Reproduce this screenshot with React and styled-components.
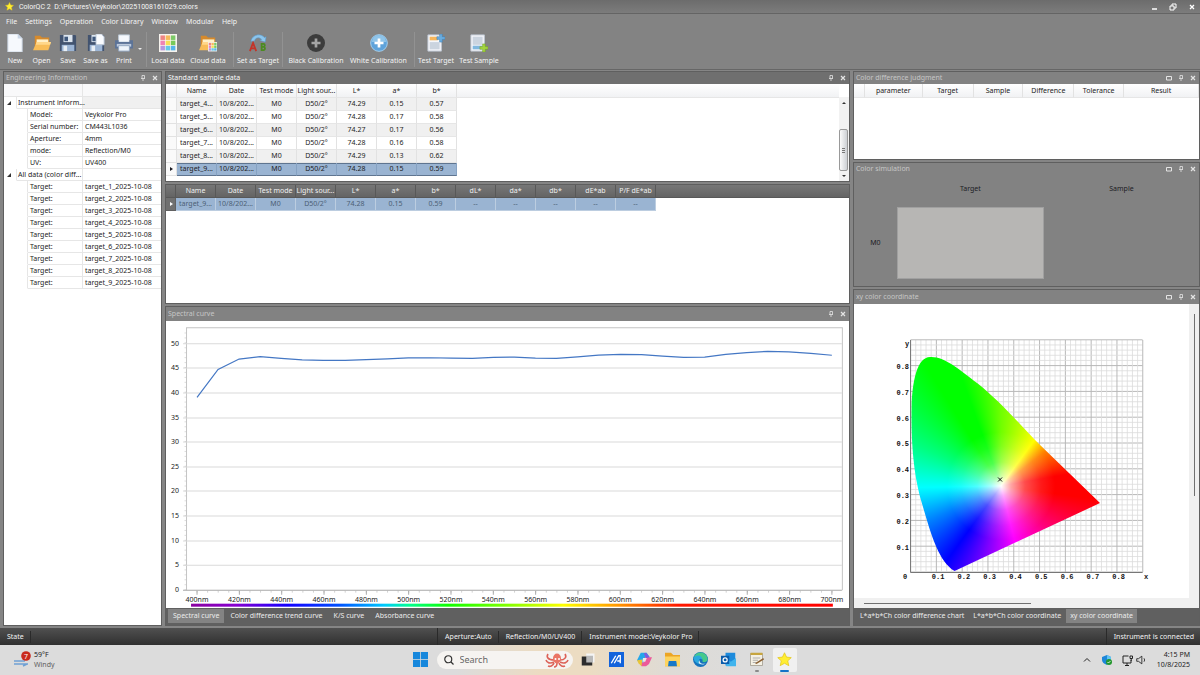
/* eslint-disable react/prop-types */
import React from "react";
import styled, { createGlobalStyle, css } from "styled-components";

const GlobalStyle = createGlobalStyle`
    * {
        box-sizing: border-box;
    }

    body {
        margin: 0;
        background: #7f7f7f;
        font-family: "Noto Sans", "Open Sans", sans-serif;
        font-size: 7px;
        line-height: 12px;
        color: #1c1c24;
    }

    button, input {
        font: inherit;
        color: inherit;
        border: 0;
        padding: 0;
        margin: 0;
        background: none;
    }

    svg {
        display: block;
    }
`;

const Page = styled.div`
    display: grid;
    grid-template-rows: 14px 16px 40px 1fr 17px 30px;
    min-height: 100vh;
`;

const TitleBar = styled.header`
    display: flex;
    align-items: center;
    gap: 5px;
    padding: 0 4px 0 5px;
    color: #f4f4f4;
    background: linear-gradient(#6c6c6c, #7c7c7c);
    border-bottom: 1px solid #646464;

    h1 {
        flex: 1;
        margin: 0;
        font-family: Roboto, sans-serif;
        font-size: 7px;
        font-weight: 400;
        white-space: pre;
    }
`;

const WindowButtons = styled.div`
    display: flex;
    gap: 11px;
`;

const MenuBar = styled.nav`
    display: flex;
    align-items: center;
    gap: 8px;
    padding: 0 6px;
    color: #f4f4f4;
    background: #838383;
`;

const ToolBar = styled.div`
    display: flex;
    align-items: stretch;
    padding: 2px;
    color: #f4f4f4;
    background: #838383;
    border-bottom: 1px solid #666;
`;

const Tool = styled.button`
    display: flex;
    flex-direction: column;
    align-items: center;
    justify-content: space-between;
    flex: none;
    width: ${(props) => props.$width}px;
    padding-top: 2px;
    white-space: nowrap;
    line-height: 12px;
`;

const DropArrow = styled.span`
    display: flex;
    align-items: center;
`;

const Separator = styled.span`
    width: 1px;
    margin: 0 3px;
    background: #929292;
`;

const Main = styled.main`
    display: grid;
    grid-template-columns: 159px minmax(0, 1fr) 29%;
    gap: 3px;
    padding: 1px 0 2px 3px;
    background: #858585;
`;

const Column = styled.div`
    display: flex;
    flex-direction: column;
    gap: 2px;
    min-width: 0;
`;

const PanelBox = styled.section`
    display: flex;
    flex-direction: column;
    flex: ${(props) => (props.$grow ? "1 1 0" : "none")};
    min-height: 0;
    border: 1px solid #5f5f5f;
    background: #828282;
`;

const PanelTitle = styled.div`
    display: flex;
    align-items: center;
    gap: 6px;
    height: ${(props) => (props.$tall ? 14 : 12)}px;
    padding: 0 3px 0 2px;
    color: ${(props) => (props.$active ? "#fafafa" : "#c6c6c6")};
    background: ${(props) => (props.$active ? "#6f6f6f" : "#828282")};

    h2 {
        flex: 1;
        margin: 0;
        font-size: 7px;
        font-weight: 400;
    }

    button {
        color: #e4e4e4;
    }
`;

const PanelBody = styled.div`
    display: flex;
    flex: 1;
    min-height: ${(props) => props.$minHeight || 0}px;
    background: #fff;
`;

const DataTable = styled.table`
    flex: none;
    align-self: flex-start;
    border-collapse: separate;
    border-spacing: 0;
    table-layout: fixed;
    width: ${(props) => props.$width};

    th, td {
        height: 13px;
        padding: 0;
        overflow: hidden;
        font-weight: 400;
        line-height: 12px;
        text-align: center;
        white-space: nowrap;
        border-right: 1px solid #e2e2e2;
        border-bottom: 1px solid #e6e6e6;
    }

    th {
        height: 14px;
        background: linear-gradient(#fff, #f1f2f4);
    }

    tbody tr:nth-child(odd) td {
        background: #f0f0f0;
    }

    tbody tr.selected td {
        background: #9ab4d2;
        border-color: #86a2c2;
        border-bottom-color: #5f7590;
        box-shadow: inset 0 1px #5f7590;
    }

    tbody tr td:first-child, tbody tr.selected td:first-child {
        background: #fafafa;
        border-color: #e2e2e2;
        box-shadow: none;
    }

    ${(props) => props.$dark && css`
        color: #4c5f75;

        th {
            height: 13px;
            color: #f0f0f0;
            background: linear-gradient(#777, #646464);
            border-color: #585858;
        }

        tbody tr.selected td {
            background: #9ab4d2;
            border-color: #bccde0;
            box-shadow: none;
        }

        tbody tr.selected td:first-child {
            color: #fff;
            background: #707070;
            border-color: #606060;
        }
    `}
`;

const HeaderFill = styled.div`
    flex: 1;
    height: ${(props) => (props.$dark ? 13 : 14)}px;
    background: ${(props) => (props.$dark ? "linear-gradient(#777, #646464)" : "linear-gradient(#fff, #f1f2f4)")};
    border-bottom: 1px solid ${(props) => (props.$dark ? "#585858" : "#e6e6e6")};
`;

const InfoTable = styled.table`
    width: 100%;
    align-self: flex-start;
    border-collapse: separate;
    border-spacing: 0;
    table-layout: fixed;

    th, td {
        height: 12px;
        padding: 0 0 0 2px;
        font-weight: 400;
        line-height: 11px;
        text-align: left;
        white-space: nowrap;
        border-right: 1px solid #e6e6e6;
        border-bottom: 1px solid #e6e6e6;
    }

    td:last-child {
        border-right: 0;
    }

    thead td {
        height: 13px;
        background: #f9f9fa;
    }

    .group {
        padding-left: 1px;
    }

    .blank {
        border-bottom-color: #fff;
    }

    .shade {
        background: #f0f0f0;
    }
`;

const ScrollTrack = styled.div`
    display: flex;
    flex-direction: column;
    align-items: center;
    width: 10px;
    margin-top: 13px;
    padding: 4px 0 2px;
    background: #f2f2f2;
`;

const ScrollThumb = styled.div`
    width: 9px;
    height: 42px;
    margin: 24px 0 3px;
    padding: 18px 2px 0;
    border: 1px solid #999;
    border-radius: 2px;
    background: linear-gradient(90deg, #fafafa, #cdd0d4);

    i {
        display: block;
        height: 2px;
        border-top: 1px solid #777;
    }
`;

const Simulation = styled.div`
    display: grid;
    grid-template-columns: 43px 147fr 155fr;
    grid-template-rows: 12px 72px;
    row-gap: 12px;
    align-items: center;
    justify-items: center;
    padding: 8px 0 7px;

    .swatch {
        width: 100%;
        height: 100%;
        background: #b7b6b4;
        border: 1px solid #a0a0a0;
    }
`;

const Chart = styled.svg`
    width: 100%;
    height: 100%;
    min-height: 0;
    flex: 1;
    background: #fff;
`;

const ChartFrame = styled.div`
    display: grid;
    grid-template-columns: minmax(0, 1fr) 10px;
    grid-template-rows: minmax(0, 1fr) 10px;
    flex: 1 1 0;
    min-height: 0;
    background: #f0f0f0;
`;

const ThinBarVertical = styled.div`
    width: 1px;
    height: 62%;
    margin: 10px 0 0 5px;
    background: #707070;
`;

const ThinBarHorizontal = styled.div`
    width: 50%;
    height: 1px;
    margin: 5px 0 0 10px;
    background: #707070;
`;

const Gamut = styled.div`
    width: 200px;
    height: 220px;
    background:
        radial-gradient(circle at 91px 131px, #fff 0, rgba(255, 255, 255, 0.65) 10px, rgba(255, 255, 255, 0.3) 24px, rgba(255, 255, 255, 0.1) 40px, rgba(255, 255, 255, 0) 54px),
        conic-gradient(from 0deg at 91px 131px, #70ff00 0deg, #ffff00 36deg, #ff8000 52deg, #ff0000 80deg, #ff0000 98deg, #ff0080 134deg, #ff00ff 166deg, #8000ff 192deg, #0000ff 216deg, #0080ff 244deg, #00ffff 269deg, #00ff80 296deg, #00ff00 328deg, #00ff00 340deg, #70ff00 360deg);
`;

const TabStrip = styled.div`
    display: flex;
    gap: 1px;
    height: 17px;
    padding: 1px 2px 2px;
    color: #ececec;
    background: #606060;
`;

const Tab = styled.button`
    padding: 0 ${(props) => (props.$tight ? 4 : 5)}px;
    white-space: nowrap;
    background: ${(props) => (props.$active ? "#838383" : "transparent")};
`;

const StatusBar = styled.footer`
    display: flex;
    align-items: center;
    color: #f2f2f2;
    background: linear-gradient(#505050, #303030);

    span {
        padding: 0 6px 0 7px;
        border-right: 1px solid #2a2a2a;
    }

    .space {
        flex: 1;
        align-self: stretch;
        border-right: 1px solid #2a2a2a;
    }

    span:last-child {
        border-right: 0;
    }
`;

const TaskBar = styled.div`
    display: grid;
    grid-template-columns: 1fr auto 1fr;
    align-items: center;
    background: linear-gradient(90deg, #dcdcdc 38%, #ecdcc2 45%, #ecdcc2 49%, #dedbd6 56%, #dcdcdc 62%);
`;

const Weather = styled.div`
    display: flex;
    align-items: center;
    gap: 3px;
    padding-left: 13px;
    line-height: 10px;

    small {
        display: block;
        font-size: 7px;
        color: #606060;
    }
`;

const Apps = styled.div`
    display: flex;
    align-items: center;
    gap: 4px;
    padding-left: 5px;
`;

const AppButton = styled.button`
    display: flex;
    flex-direction: column;
    align-items: center;
    justify-content: space-between;
    width: 24px;
    height: 24px;
    padding: 4px 0 0;
    border-radius: 2px;
    background: ${(props) => (props.$active ? "#f0f0f0" : "transparent")};

    i {
        width: ${(props) => (props.$active ? 9 : 4)}px;
        height: 2px;
        border-radius: 1px;
        background: ${(props) => (props.$active ? "#1374c8" : props.$running ? "#8a8a8a" : "transparent")};
    }
`;

const SearchBox = styled.label`
    display: flex;
    align-items: center;
    gap: 6px;
    width: 136px;
    height: 18px;
    padding: 0 4px 0 7px;
    border-radius: 9px;
    background: #f6f4f1;

    input {
        flex: 1;
        min-width: 0;
        font-size: 9px;
        outline: 0;
    }

    input::placeholder {
        color: #666;
        opacity: 1;
    }
`;

const Tray = styled.div`
    display: flex;
    align-items: center;
    justify-content: flex-end;
    padding-right: 10px;

    button {
        margin-right: 10px;
    }

    svg + svg {
        margin-left: 2px;
    }

    time {
        margin-left: 10px;
        line-height: 10px;
        text-align: right;
    }
`;

const Icon = ({ size = 20, box = 20, children }) => (
    <svg width={size} height={size} viewBox={`0 0 ${box} ${box}`} aria-hidden="true">{children}</svg>
);

const Star = ({ size }) => (
    <Icon size={size}>
        <path d="M10 1l2.7 5.8 6.3.7-4.7 4.3 1.4 6.4L10 15l-5.700 3.200 1.400-6.400L1 7.500l6.300-.7z" fill="#ffee32" stroke="#e3c51b" />
    </Icon>
);

const Floppy = () => (
    <g>
        <path d="M1 1h17l1 1v17H1z" fill="#42536f" />
        <path d="M5 1h10v8H5z" fill="#dce5ef" />
        <path d="M6 3h4v5H6z" fill="#3f587c" />
        <path d="M3 12h14v7H3z" fill="#9cb5d5" />
        <path d="M5 13h4v6H5z" fill="#e8eef5" />
    </g>
);

const Folder = () => (
    <g>
        <path d="M2 2h6l2 2h8v12H2z" fill="#d68a2c" />
        <path d="M4 6h13v5H4z" fill="#fff0c8" />
        <path d="M4 9h16l-3 9H0z" fill="#f8bd58" />
        <path d="M4 9h16l-1 3H3z" fill="#ffd78a" />
    </g>
);

const tileColors = ["#ef8585", "#f7ba5b", "#7cca68", "#ee83b3", "#f6df55", "#78c95a", "#b597df", "#65c9e7", "#55b5ea"];

const Tiles = () => (
    <g>
        <path d="M0 0h20v20H0z" fill="#f7f4ef" />
        {tileColors.map((color, i) => (
            <rect key={color} x={1.6 + (i % 3) * 5.8} y={1.6 + Math.floor(i / 3) * 5.8} width="5" height="5" fill={color} />
        ))}
    </g>
);

const Plus = ({ color }) => <path d="M8.5 5h3v3.5H15v3h-3.5V15h-3v-3.5H5v-3h3.5z" fill={color} />;

const toolIcons = {
    New: (
        <g>
            <path d="M2 0h11l5 5v15H2z" fill="#f6f9fd" stroke="#c4cfdd" />
            <path d="M13 0v5h5z" fill="#c9d6e6" />
        </g>
    ),
    Open: <Folder />,
    Save: <Floppy />,
    "Save as": (
        <g>
            <Floppy />
            <path d="M10 0h6l3 3v9h-9z" fill="#fafcff" stroke="#b9c6d6" />
        </g>
    ),
    Print: (
        <g>
            <path d="M4 1h12v8H4z" fill="#f5f8fc" stroke="#bcc8d6" />
            <path d="M0 7h4v2h12V7h4v9H0z" fill="#5d7498" />
            <path d="M2 11h16v3H2z" fill="#bdcadc" />
            <path d="M4 13h12v6H4z" fill="#eef4fb" stroke="#8fa4bf" />
        </g>
    ),
    "Local data": <Tiles />,
    "Cloud data": (
        <g>
            <Folder />
            <g transform="translate(10 9) scale(.52)"><Tiles /></g>
        </g>
    ),
    "Set as Target": (
        <g>
            <path d="M2 8C4 0 14-1 17 4l2-1-1 6-6-2 2-1c-3-3-7-2-8 2z" fill="#8cc5ec" stroke="#5598cc" strokeWidth=".6" />
            <path d="M1 19l3.500-9L8 19M2.300 16H7" stroke="#c33429" strokeWidth="2" fill="none" />
            <path d="M14 11v7h2.400a2 2 0 000-3.800H14h2a1.600 1.600 0 000-3.200z" stroke="#4b8b20" strokeWidth="2" fill="none" />
        </g>
    ),
    "Black Calibration": (
        <g>
            <circle cx="10" cy="10" r="10" fill="#3c3c3c" />
            <Plus color="#a4a4a4" />
        </g>
    ),
    "White Calibration": (
        <g>
            <circle cx="10" cy="10" r="9.300" fill="#5fa3da" stroke="#a8d3f0" />
            <path d="M2 9a8 8 0 0116 0z" fill="#8fc4e9" />
            <Plus color="#fff" />
        </g>
    ),
    "Test Target": (
        <g>
            <path d="M1 1h15v18H1z" fill="#f4f6fa" stroke="#bdc6d1" />
            <path d="M3 3h9v4H3z" fill="#f6b65c" />
            <path d="M3 9h11v8H3z" fill="#cbd4df" />
            <path d="M14 0h3v3h3v3h-3v3h-3V6h-3V3h3z" fill="#69acdf" stroke="#3979ae" strokeWidth=".5" />
        </g>
    ),
    "Test Sample": (
        <g>
            <path d="M1 1h15v18H1z" fill="#f4f6fa" stroke="#bdc6d1" />
            <path d="M3 3h11v9H3z" fill="#cbd4df" />
            <path d="M3 13h11v4H3z" fill="#81b8df" />
            <path d="M14 11h3v3h3v3h-3v3h-3v-3h-3v-3h3z" fill="#a3d43e" stroke="#6b9a20" strokeWidth=".5" />
        </g>
    ),
};

const toolGroups = [
    [["New", 26], ["Open", 27], ["Save", 26], ["Save as", 29], ["Print", 28]],
    [["Local data", 36], ["Cloud data", 44]],
    [["Set as Target", 42]],
    [["Black Calibration", 60], ["White Calibration", 65]],
    [["Test Target", 36], ["Test Sample", 50]],
];

const menus = ["File", "Settings", "Operation", "Color Library", "Window", "Modular", "Help"];

const sampleRows = [
    ["target_4...", "74.29", "0.15", "0.57"],
    ["target_5...", "74.28", "0.17", "0.58"],
    ["target_6...", "74.27", "0.17", "0.56"],
    ["target_7...", "74.28", "0.16", "0.58"],
    ["target_8...", "74.29", "0.13", "0.62"],
    ["target_9...", "74.28", "0.15", "0.59"],
];

const instrument = [
    ["Model:", "Veykolor Pro"],
    ["Serial number:", "CM443L1036"],
    ["Aperture:", "4mm"],
    ["mode:", "Reflection/M0"],
    ["UV:", "UV400"],
];

const baseColumns = ["Name", "Date", "Test mode", "Light sour...", "L*", "a*", "b*"];
const deltaColumns = ["dL*", "da*", "db*", "dE*ab", "P/F dE*ab"];

const PanelButtons = ({ wide }) => (
    <>
        {wide && (
            <button type="button" aria-label="Maximize">
                <Icon size={6} box={6}><path d="M.5 1.500h5v3.500h-5z" fill="none" stroke="currentColor" /></Icon>
            </button>
        )}
        <button type="button" aria-label="Pin">
            <Icon size={6} box={6}><path d="M2 .5h2.500v3M2 .5v3M1 3.500h4M3 3.500V6" fill="none" stroke="currentColor" strokeWidth=".8" /></Icon>
        </button>
        <button type="button" aria-label="Close">
            <Icon size={6} box={6}><path d="M1 1l4 4M5 1L1 5" stroke="currentColor" strokeWidth="1.200" /></Icon>
        </button>
    </>
);

const Panel = ({ title, active, tall, grow, wide, children }) => (
    <PanelBox $grow={grow}>
        <PanelTitle $active={active} $tall={tall}>
            <h2>{title}</h2>
            <PanelButtons wide={wide} />
        </PanelTitle>
        {children}
    </PanelBox>
);

const Arrow = () => (
    <svg width="9" height="6" viewBox="0 0 9 6" aria-hidden="true"><path d="M4 1l3 2-3 2z" fill="currentColor" /></svg>
);

const SampleTable = () => (
    <DataTable $width="291px">
        <colgroup>
            <col style={{ width: 11 }} />
        </colgroup>
        <thead>
            <tr>
                <th />
                {baseColumns.map((name) => <th key={name}>{name}</th>)}
            </tr>
        </thead>
        <tbody>
            {sampleRows.map(([name, l, a, b], i) => (
                <tr key={name} className={i === 5 ? "selected" : ""}>
                    <td>{i === 5 && <Arrow />}</td>
                    <td>{name}</td>
                    <td>10/8/202...</td>
                    <td>M0</td>
                    <td>D50/2°</td>
                    <td>{l}</td>
                    <td>{a}</td>
                    <td>{b}</td>
                </tr>
            ))}
        </tbody>
    </DataTable>
);

const DeltaTable = () => (
    <DataTable $width="490px" $dark>
        <colgroup>
            <col style={{ width: 10 }} />
        </colgroup>
        <thead>
            <tr>
                <th />
                {[...baseColumns, ...deltaColumns].map((name) => <th key={name}>{name}</th>)}
            </tr>
        </thead>
        <tbody>
            <tr className="selected">
                <td><Arrow /></td>
                {["target_9...", "10/8/202...", "M0", "D50/2°", "74.28", "0.15", "0.59"].map((v) => <td key={v}>{v}</td>)}
                {deltaColumns.map((name) => <td key={name}>--</td>)}
            </tr>
        </tbody>
    </DataTable>
);

const judgmentColumns = [["", 11], ["parameter", 58], ["Target", 51], ["Sample", 50], ["Difference", 51], ["Tolerance", 50], ["Result", 75]];

const JudgmentTable = () => (
    <DataTable $width="100%">
        <thead>
            <tr>
                {judgmentColumns.map(([name, width]) => (
                    <th key={name} style={{ width: `${(width / 346) * 100}%` }}>{name}</th>
                ))}
            </tr>
        </thead>
    </DataTable>
);

const Caret = () => (
    <svg width="6" height="6" viewBox="0 0 6 6" aria-hidden="true"><path d="M5 1v4H1z" fill="#333" /></svg>
);

const InfoGroup = ({ title, rows, shade }) => (
    <tbody>
        <tr>
            <td className="blank"><Caret /></td>
            <th className="group" colSpan={2}>{title}</th>
            <td className={shade ? "shade" : ""} />
        </tr>
        {rows.map(([label, value]) => (
            <tr key={value}>
                <td className="blank" colSpan={2} />
                <th>{label}</th>
                <td>{value}</td>
            </tr>
        ))}
    </tbody>
);

const curve = [
    [197, 398], [218, 370], [239, 359.7], [260, 357.3], [281, 359], [302, 360.5], [323, 361.1], [345, 361.1],
    [366, 360.3], [387, 359.6], [408, 358.6], [430, 358.4], [451, 358.8], [472, 359], [493, 358], [514, 357.8],
    [535, 358.8], [556, 359.1], [577, 357.6], [598, 355.8], [620, 355], [641, 355.2], [662, 356.8], [683, 358],
    [704, 357.8], [725, 355], [746, 353.2], [767, 352], [788, 352.6], [810, 354], [831, 355.9],
];

const range = (n) => Array.from({ length: n }, (_, i) => i);

const spectrum = [
    [0, "#8a00a0"], [7, "#8800d0"], [15, "#1400ff"], [23, "#0050ff"], [30, "#00c8ff"], [34, "#00ff90"],
    [40, "#10ff00"], [50, "#8cff00"], [58, "#ffff00"], [67, "#ff9000"], [76, "#ff1800"], [100, "#ff0000"],
];

const SpectralChart = () => (
    <Chart viewBox="166 322 682 286" role="img" aria-label="Spectral curve" fontSize="7" fill="#222">
        <defs>
            <linearGradient id="spectrum">
                {spectrum.map(([at, color]) => <stop key={at} offset={`${at}%`} stopColor={color} />)}
            </linearGradient>
        </defs>
        <path d="M186.5 590.5V328.5H841.5V590.5" fill="none" stroke="#c4c4c4" />
        {range(11).map((i) => {
            const y = Math.round(590 - i * 24.63) + 0.5;
            return (
                <g key={i}>
                    <path d={`M183 ${y}H841`} stroke={i ? "#dadada" : "#a8a8a8"} />
                    <text x="179" y={y + 2} textAnchor="end">{i * 5}</text>
                </g>
            );
        })}
        {range(53).map((i) => <path key={i} d={`M184.5 ${590 - i * 4.93}h2`} stroke="#c4c4c4" strokeWidth=".6" />)}
        {range(61).map((i) => <path key={i} d={`M${197 + i * 10.57} 591v2`} stroke="#b4b4b4" strokeWidth=".6" />)}
        {range(16).map((i) => (
            <g key={i}>
                <path d={`M${197 + i * 42.27} 591v4`} stroke="#aaa" />
                <text x={197 + i * 42.27} y="602" textAnchor="middle">{400 + i * 20}nm</text>
            </g>
        ))}
        <rect x="191" y="604" width="641" height="3" fill="url(#spectrum)" />
        <polyline points={curve.join(" ")} fill="none" stroke="#4477c4" strokeWidth="1.2" />
    </Chart>
);

const locus = "M954.5 571C937 561 929 527 920 497C913 470 911 440 911.5 408C912 382 917 357 930 357C944 356 960 370 977 383C1000 401 1022 427 1040 445L1100 503Z";

const XyChart = () => (
    <Chart viewBox="854 304 335 294" role="img" aria-label="xy chromaticity diagram" fontFamily='"Liberation Mono", monospace' fontSize="7" fontWeight="700" fill="#111">
        <clipPath id="locus"><path d={locus} /></clipPath>
        {range(46).map((i) => (
            <path
                key={i}
                d={`M${910.5 + i * 5.16} 340V572M910.5 ${572 - i * 5.16}H1142.5`}
                stroke={i % 5 ? "#dcdcdc" : "#b8b8b8"}
                strokeWidth={i % 5 ? 0.8 : 1}
            />
        ))}
        <path d="M910.5 340V572.5H1142.5" fill="none" stroke="#777" />
        <foreignObject x="910" y="355" width="200" height="220" clipPath="url(#locus)">
            <Gamut />
        </foreignObject>
        <path d="M998 477.5l4 4M1002 477.5l-4 4" stroke="#111" />
        {range(8).map((i) => (
            <g key={i}>
                <text x="909" y={549.5 - i * 25.8} textAnchor="end">0.{i + 1}</text>
                <text x={938 + i * 25.8} y="578.5" textAnchor="middle">0.{i + 1}</text>
            </g>
        ))}
        <text x="905" y="578.5" textAnchor="middle">0</text>
        <text x="905" y="346">y</text>
        <text x="1144" y="578.5">x</text>
    </Chart>
);

const Tabs = ({ items, current, tight }) => (
    <TabStrip role="tablist">
        {items.map((item) => (
            <Tab key={item} type="button" role="tab" aria-selected={item === current} $active={item === current} $tight={tight}>{item}</Tab>
        ))}
    </TabStrip>
);

const apps = [
    ["Task view", <g key="i"><path d="M7 2h11v12H7z" fill="#f4f4f4" /><path d="M1 6h14v12H1z" fill="#2c2c2c" /><path d="M7 5h9v9H7z" fill="#b9b9b9" /></g>],
    ["MyASUS", <g key="i"><path d="M0 0h20v20H0z" fill="#1263dc" /><path d="M3 15L9 5M7 15l6-10h2v10M11 12h4" fill="none" stroke="#fff" strokeWidth="1.8" /></g>],
    ["Copilot", <g key="i"><path d="M5 1h8l4 6h-5L9 14H3L0 11z" fill="#25a7ea" /><path d="M12 2l4 5h4l-4 9-4 3H6l-3-5h6z" fill="#ec5a9a" /><path d="M0 11l7-1-1 9-4-4z" fill="#e8c537" /><path d="M12 1l5 6-5 1-3-6z" fill="#7c5be0" /><path d="M8 8h5l-2 5H7z" fill="#eee6e2" /></g>],
    ["File Explorer", <g key="i"><path d="M0 1h8l3 3h9v15H0z" fill="#eca524" /><path d="M0 6h20v13H0z" fill="#fdd35e" /><path d="M5 12h10l1 7H4z" fill="#1778c8" /></g>],
    ["Edge", <g key="i"><circle cx="10" cy="10" r="10" fill="#1672bd" /><path d="M1 8C4-3 19-1 19.5 10c-1 4-5 4-7 3 2-6-6-8-11.5-5z" fill="#46c98c" /><path d="M1 8c4-6 12-3 11 2-3-3-6 2-3 6-5-1-8-4-8-8z" fill="#2aa8df" /><path d="M9 11c-1 4 4 6 8 4-2 2-6 2-8 1-2-1-2-4 0-5z" fill="#d8edf5" /></g>],
    ["Outlook", <g key="i"><path d="M6 1h13v17H6z" fill="#1d8bdc" /><path d="M7 8l6 5 7-5v11H7z" fill="#40b4ed" /><path d="M0 5h11v11H0z" fill="#0b5cab" /><circle cx="5.5" cy="10.5" r="2.7" fill="none" stroke="#fff" strokeWidth="1.6" /></g>],
    ["Notes", <g key="i"><path d="M2 2h16v16H2z" fill="#f4f0e4" stroke="#9d978a" /><path d="M2 1h16v3H2z" fill="#c7a53e" /><path d="M5 8h10M5 11h7M5 14h5" stroke="#9a9a9a" /><path d="M8 15l11-7 1 2-10 6z" fill="#8c6134" /></g>],
];

const App = () => (
    <Page>
        <GlobalStyle />
        <TitleBar>
            <Star size={9} />
            <h1>{"ColorQC 2  D:\\Pictures\\Veykolor\\20251008161029.colors"}</h1>
            <WindowButtons>
                <button type="button" aria-label="Minimize"><Icon size={8} box={8}><path d="M2 6h5" stroke="#fff" strokeWidth="1.5" /></Icon></button>
                <button type="button" aria-label="Restore"><Icon size={8} box={8}><path d="M1 3h4v4H1zM3 3V1h4v4H5" fill="none" stroke="#fff" /></Icon></button>
                <button type="button" aria-label="Close"><Icon size={8} box={8}><path d="M2 2l4 4M6 2L2 6" stroke="#fff" strokeWidth="1.3" /></Icon></button>
            </WindowButtons>
        </TitleBar>
        <MenuBar>
            {menus.map((menu) => <button key={menu} type="button">{menu}</button>)}
        </MenuBar>
        <ToolBar>
            {toolGroups.map((group, i) => (
                <React.Fragment key={group[0][0]}>
                    {i > 0 && <Separator />}
                    {group.map(([name, width]) => (
                        <Tool key={name} type="button" $width={width}>
                            <Icon size={18}>{toolIcons[name]}</Icon>
                            {name}
                        </Tool>
                    ))}
                    {i === 0 && <DropArrow><Icon size={5} box={5}><path d="M0 1h4L2 3z" fill="#eee" /></Icon></DropArrow>}
                </React.Fragment>
            ))}
        </ToolBar>
        <Main>
            <Column>
                <Panel title="Engineering Information" grow>
                    <PanelBody>
                        <InfoTable>
                            <colgroup>
                                <col style={{ width: 13 }} />
                                <col style={{ width: 11 }} />
                                <col style={{ width: 55 }} />
                                <col />
                            </colgroup>
                            <thead>
                                <tr><td colSpan={3} /><td /></tr>
                            </thead>
                            <InfoGroup title="Instrument inform..." rows={instrument} shade />
                            <InfoGroup title="All data (color diff..." rows={range(9).map((i) => ["Target:", `target_${i + 1}_2025-10-08`])} />
                        </InfoTable>
                    </PanelBody>
                </Panel>
            </Column>
            <Column>
                <Panel title="Standard sample data" active>
                    <PanelBody $minHeight={97}>
                        <SampleTable />
                        <HeaderFill />
                        <ScrollTrack>
                            <Icon size={4} box={4}><path d="M0 3h4L2 1z" fill="#333" /></Icon>
                            <ScrollThumb><i /><i /><i /></ScrollThumb>
                            <Icon size={4} box={4}><path d="M0 1h4L2 3z" fill="#333" /></Icon>
                        </ScrollTrack>
                    </PanelBody>
                </Panel>
                <PanelBox>
                    <PanelBody $minHeight={118}>
                        <DeltaTable />
                        <HeaderFill $dark />
                    </PanelBody>
                </PanelBox>
                <Panel title="Spectral curve" tall grow>
                    <SpectralChart />
                    <Tabs items={["Spectral curve", "Color difference trend curve", "K/S curve", "Absorbance curve"]} current="Spectral curve" />
                </Panel>
            </Column>
            <Column>
                <Panel title="Color difference judgment" wide>
                    <PanelBody $minHeight={75}>
                        <JudgmentTable />
                    </PanelBody>
                </Panel>
                <Panel title="Color simulation" wide>
                    <Simulation>
                        <span />
                        <span>Target</span>
                        <span>Sample</span>
                        <span>M0</span>
                        <div className="swatch" />
                    </Simulation>
                </Panel>
                <Panel title="xy color coordinate" tall grow wide>
                    <ChartFrame>
                        <XyChart />
                        <ThinBarVertical />
                        <ThinBarHorizontal />
                    </ChartFrame>
                    <Tabs items={["L*a*b*Ch color difference chart", "L*a*b*Ch color coordinate", "xy color coordinate"]} current="xy color coordinate" tight />
                </Panel>
            </Column>
        </Main>
        <StatusBar>
            <span>State</span>
            <div className="space" />
            <span>Aperture:Auto</span>
            <span>Reflection/M0/UV400</span>
            <span>Instrument model:Veykolor Pro</span>
            <div className="space" />
            <span>Instrument is connected</span>
        </StatusBar>
        <TaskBar>
            <Weather>
                <Icon size={18} box={18}>
                    <path d="M1 10h11M1 13h14M10 15l4-2" stroke="#6fa0d4" strokeWidth="1.5" fill="none" />
                    <circle cx="13" cy="5" r="4.8" fill="#c9281c" />
                    <text x="13" y="8" textAnchor="middle" fontSize="7" fill="#fff">7</text>
                </Icon>
                <div>59°F<small>Windy</small></div>
            </Weather>
            <Apps>
                <AppButton type="button" aria-label="Start">
                    <Icon size={15}><path d="M0 0h9.5v9.5H0zM10.5 0H20v9.5h-9.5zM0 10.5h9.5V20H0zM10.5 10.5H20V20h-9.5z" fill="#1687dc" /></Icon>
                    <i />
                </AppButton>
                <SearchBox>
                    <Icon size={10}><circle cx="8.5" cy="8.5" r="7" fill="none" stroke="#333" strokeWidth="2.4" /><path d="M14 14l5 5" stroke="#333" strokeWidth="2.4" /></Icon>
                    <input type="text" placeholder="Search" aria-label="Search" />
                    <svg width="24" height="16" viewBox="0 0 24 16" aria-hidden="true">
                        <path d="M9 8C3 8 1 5 3 2M9 10C5 12 2 11 1 8M9 11c-1 3-4 4-6 3M12 11c0 2-1 4-3 4M15 8c5 0 7-3 5-6M15 10c4 2 7 1 8-2M14 11c1 3 4 4 6 3" fill="none" stroke="#dc6258" strokeWidth="1.6" />
                        <ellipse cx="12" cy="6.5" rx="4" ry="5" fill="#ea7565" />
                        <circle cx="10.5" cy="7" r="1" fill="#fff" />
                        <circle cx="14" cy="7" r="1" fill="#fff" />
                    </svg>
                </SearchBox>
                {apps.map(([name, drawing]) => (
                    <AppButton key={name} type="button" aria-label={name} $running={name === "Notes"}>
                        <Icon size={15}>{drawing}</Icon>
                        <i />
                    </AppButton>
                ))}
                <AppButton type="button" aria-label="ColorQC" $active>
                    <Star size={15} />
                    <i />
                </AppButton>
            </Apps>
            <Tray>
                <button type="button" aria-label="Hidden icons"><Icon size={10} box={10}><path d="M2 6.5l3-3 3 3" fill="none" stroke="#222" /></Icon></button>
                <button type="button" aria-label="Security"><Icon size={10} box={10}><path d="M0 2l5-2 4 2v3c0 3-3 4-4 5-3-1-5-3-5-5z" fill="#1d86d8" /><path d="M5 0l4 2v3H5z" fill="#60c3f4" /><circle cx="7" cy="7" r="3" fill="#23972d" /><path d="M5.5 7l1 1 2-2" fill="none" stroke="#fff" strokeWidth=".8" /></Icon></button>
                <Icon size={11} box={11}><path d="M6.5 1H1v7h8V5M3 10.5h4M5 8v2M8 1h2.5v2.5H8zM9.2 3.5V6" fill="none" stroke="#222" /></Icon>
                <Icon size={12} box={14}><path d="M2 5.5h2l4-3v9l-4-3H2zM10.500 5q1.500 2 0 4" fill="none" stroke="#222" /></Icon>
                <time dateTime="2025-10-08T16:15">4:15 PM<br />10/8/2025</time>
            </Tray>
        </TaskBar>
    </Page>
);

export default App;
